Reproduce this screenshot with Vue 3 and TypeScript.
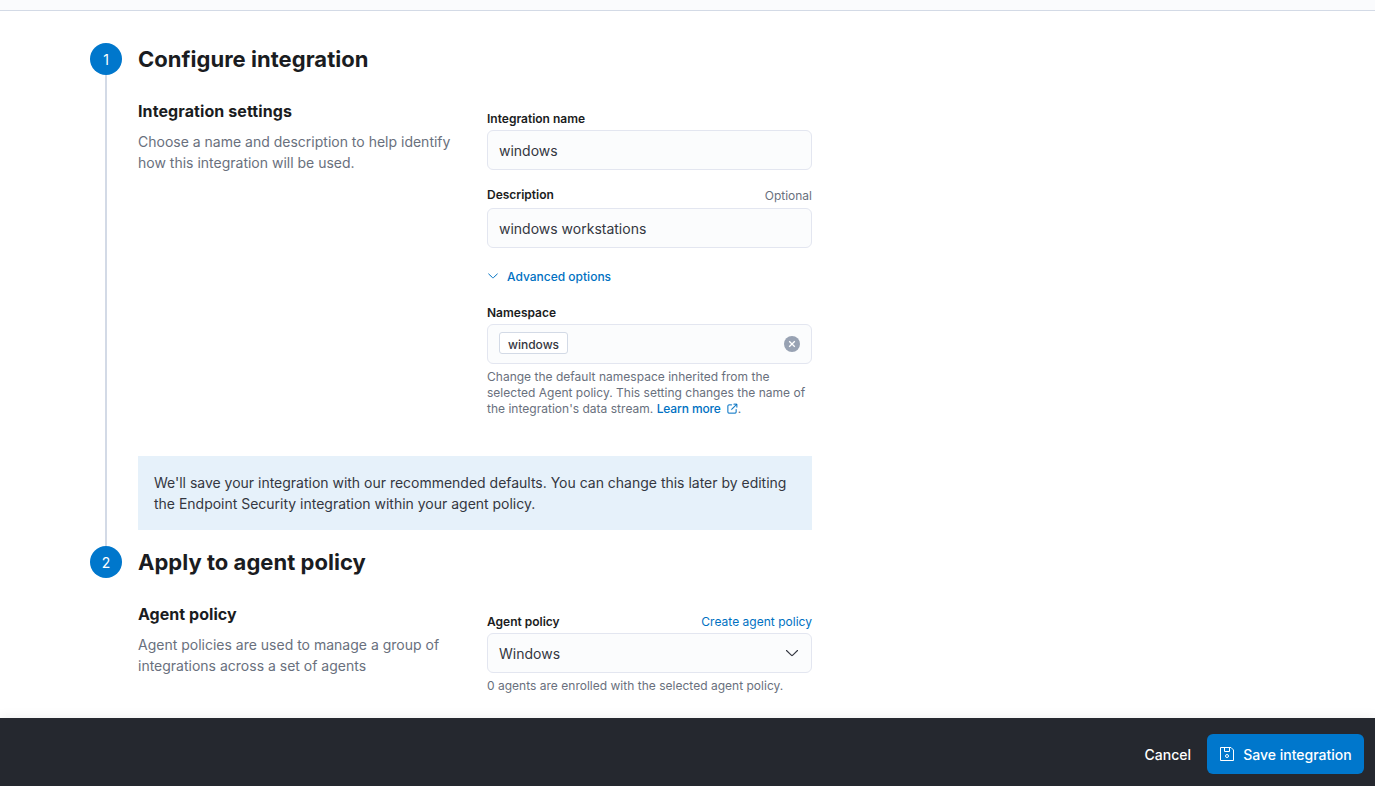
<script setup lang="ts">
import { ref } from 'vue'

const name = ref('windows')
const description = ref('windows workstations')
const namespaces = ref<string[]>(['windows'])
const policy = ref('Windows')
</script>

<template>
  <div class="page">
    <div class="header-strip"></div>

    <main class="steps">
      <section class="step step-first">
        <div class="rail">
          <span class="number">1</span>
          <span class="line"></span>
        </div>
        <div class="body">
          <h2>Configure integration</h2>
          <div class="columns">
            <div class="intro">
              <h3>Integration settings</h3>
              <p>Choose a name and description to help identify how this integration will be used.</p>
            </div>
            <div class="form">
              <div class="label-row"><label>Integration name</label></div>
              <input v-model="name" class="control" type="text" />

              <div class="label-row label-description">
                <label>Description</label>
                <span class="optional">Optional</span>
              </div>
              <input v-model="description" class="control" type="text" />

              <button class="advanced" type="button">
                <svg width="12" height="12" viewBox="0 0 12 12" fill="none" stroke="currentColor" stroke-linecap="round" stroke-linejoin="round">
                  <path d="M1.7 4 L5.6 7.7 Q6 8.1 6.4 7.7 L10.3 4" />
                </svg>
                Advanced options
              </button>

              <div class="label-row"><label>Namespace</label></div>
              <div class="control combo">
                <span v-for="item in namespaces" :key="item" class="pill">{{ item }}</span>
                <button class="clear" type="button" aria-label="Clear">
                  <svg width="16" height="16" viewBox="0 0 16 16">
                    <circle cx="8" cy="8" r="8" fill="#98a2b3" />
                    <path d="M5.200 5.200 L10.800 10.800 M10.800 5.200 L5.200 10.800" stroke="#fff" stroke-width="1.3" />
                  </svg>
                </button>
              </div>
              <p class="help help-namespace">
                Change the default namespace inherited from the selected Agent policy. This setting changes the name of the integration's data stream. <a>Learn more<svg class="external" width="12" height="12" viewBox="0 0 16 16" fill="currentColor"><path d="M13 8.5a.5.5 0 1 1 1 0V12a2 2 0 0 1-2 2H4a2 2 0 0 1-2-2V4a2 2 0 0 1 2-2h3.5a.5.5 0 0 1 0 1H4a1 1 0 0 0-1 1v8a1 1 0 0 0 1 1h8a1 1 0 0 0 1-1V8.500Zm-5.120.339a.5.5 0 1 1-.706-.707L13.305 2H10.500a.5.5 0 1 1 0-1H14a1 1 0 0 1 1 1v3.500a.5.5 0 1 1-1 0V2.720L7.880 8.839Z" stroke="currentColor" stroke-width="0.3" /></svg></a>.
              </p>
            </div>
          </div>
          <div class="callout">
            We'll save your integration with our recommended defaults. You can change this later by editing the Endpoint Security integration within your agent policy.
          </div>
        </div>
      </section>

      <section class="step">
        <div class="rail"><span class="number">2</span></div>
        <div class="body">
          <h2>Apply to agent policy</h2>
          <div class="columns">
            <div class="intro">
              <h3 class="tight">Agent policy</h3>
              <p>Agent policies are used to manage a group of integrations across a set of agents</p>
            </div>
            <div class="form">
              <div class="label-row">
                <label>Agent policy</label>
                <a class="create">Create agent policy</a>
              </div>
              <div class="control select">
                <span>{{ policy }}</span>
                <svg width="16" height="16" viewBox="0 0 16 16" fill="none" stroke="#343741" stroke-width="1.15" stroke-linecap="round" stroke-linejoin="round">
                  <path d="M2.500 5.500 L7.500 10.300 Q8 10.750 8.500 10.300 L13.500 5.500" />
                </svg>
              </div>
              <p class="help help-policy">0 agents are enrolled with the selected agent policy.</p>
            </div>
          </div>
        </div>
      </section>
    </main>

    <footer class="bottom-bar">
      <button class="cancel" type="button">Cancel</button>
      <button class="save" type="button">
        <svg width="16" height="16" viewBox="0 0 16 16" fill="none" stroke="currentColor">
          <path d="M1.500 1.500 H12 L14.500 4 V14.500 H1.500 Z M5.500 1.500 V5.500 H10.500 V1.500" />
          <circle cx="8" cy="10" r="1.500" />
        </svg>
        Save integration
      </button>
    </footer>
  </div>
</template>

<style>
body {
  margin: 0;
  background: #fff;
}
</style>

<style scoped>
.page {
  box-sizing: border-box;
  display: flex;
  flex-direction: column;
  width: 100%;
  height: 786px;
  overflow: hidden;
  color: #343741;
  font-family: Inter, "Liberation Sans", sans-serif;
  font-size: 14px;
  line-height: 21px;
}
.page * {
  box-sizing: border-box;
}
h2, h3, p {
  margin: 0;
}
button, input {
  font: inherit;
}
button {
  padding: 0;
  border: 0;
  background: none;
}
.header-strip {
  flex: none;
  height: 11px;
  border-bottom: 1px solid #d3dae6;
  background: #fafbfd;
}
.steps {
  flex: 1;
  min-height: 0;
  padding: 32px 0 0 90px;
}
.step {
  display: flex;
  gap: 16px;
}
.step-first {
  height: 503px;
}
.rail {
  display: flex;
  flex-direction: column;
  align-items: center;
  width: 32px;
}
.number {
  display: flex;
  flex: none;
  align-items: center;
  justify-content: center;
  width: 32px;
  height: 32px;
  border-radius: 50%;
  background: #0077cc;
  color: #fff;
}
.line {
  flex: 1;
  width: 2px;
  background: #d3dae6;
}
.body {
  width: 674px;
}
h2 {
  color: #1a1c21;
  font-size: 22px;
  font-weight: 700;
  letter-spacing: 0.03px;
  line-height: 32px;
}
.columns {
  display: grid;
  grid-template-columns: 325px 325px;
  gap: 24px;
  padding-top: 24px;
}
h3 {
  color: #1a1c21;
  font-size: 16px;
  font-weight: 700;
  letter-spacing: 0.09px;
  line-height: 24px;
}
.tight {
  letter-spacing: 0.04px;
}
.intro p {
  margin-top: 8px;
  color: #69707d;
}
.form {
  padding-top: 10px;
}
.label-row {
  display: flex;
  justify-content: space-between;
  height: 21px;
  padding-top: 1px;
  color: #1a1c21;
  font-size: 12px;
  line-height: 18px;
}
label {
  font-weight: 600;
}
.label-description {
  height: 22px;
  margin-top: 16px;
  padding-top: 0;
}
.optional {
  padding-top: 1px;
  color: #69707d;
}
.control {
  display: flex;
  align-items: center;
  width: 325px;
  height: 40px;
  padding: 1px 11px 0;
  border: 1px solid #e3e6f0;
  border-radius: 6px;
  outline: 0;
  background: #fbfcfd;
  color: #343741;
}
.advanced {
  display: flex;
  align-items: center;
  gap: 8px;
  height: 24px;
  margin: 16px 0 15px;
  color: #0071c2;
  font-size: 12px;
  font-weight: 500;
}
.combo,
.select {
  justify-content: space-between;
}
.select svg {
  margin-top: -2px;
}
.combo {
  padding-top: 0;
}
.pill {
  height: 22px;
  margin-top: -2px;
  padding: 1px 8px 0;
  border: 1px solid #d3dae6;
  border-radius: 3px;
  background: #fff;
  font-size: 12px;
  font-weight: 500;
  line-height: 22px;
}
.clear {
  width: 16px;
  height: 16px;
}
.clear svg,
.save svg {
  display: block;
}
.help {
  padding-top: 5px;
  color: #69707d;
  font-size: 12px;
  line-height: 16px;
}
.help-namespace,
.help-policy {
  letter-spacing: 0.015px;
}
a {
  color: #0071c2;
}
.create {
  letter-spacing: 0.02px;
}
.help a {
  font-weight: 500;
  letter-spacing: -0.12px;
}
.external {
  margin: 0 0 0 5px;
  vertical-align: -2px;
}
.callout {
  height: 74px;
  margin-top: 39px;
  padding: 16px;
  background: #e6f1fa;
  letter-spacing: -0.01px;
}
.bottom-bar {
  z-index: 1;
  display: flex;
  flex: none;
  align-items: center;
  justify-content: flex-end;
  height: 68px;
  gap: 16px;
  padding: 4px 11px 0 0;
  background: #25282f;
  box-shadow: 0 0 12px rgba(0, 0, 0, 0.08);
  color: #fff;
  font-weight: 500;
}
.cancel,
.save {
  color: #fff;
}
.cancel {
  height: 40px;
}
.save {
  display: flex;
  align-items: center;
  justify-content: center;
  gap: 8px;
  width: 157px;
  height: 40px;
  border-radius: 6px;
  background: #0077cc;
}
</style>
